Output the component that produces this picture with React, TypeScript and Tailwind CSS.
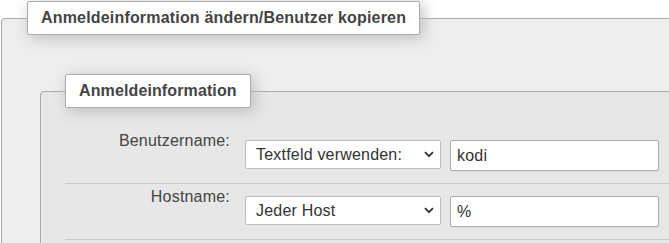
import React from "react";

function Chevron() {
  return (
    <svg width="10" height="7" viewBox="0 0 10 7" className="pointer-events-none">
      <path d="M1 1.2 L5 5.2 L9 1.2" fill="none" stroke="#333" strokeWidth="1.8" />
    </svg>
  );
}

function Row({ label, option, value }: { label: string; option: string; value: string }) {
  return (
    <div className="flex items-start border-b border-[#c8c8c8] pt-[12px] pb-[12px]">
      <div className="w-[165px] shrink-0 -mt-[8px] text-right text-[#444] leading-[18px] tracking-[0.2px]">{label}</div>
      <div className="ml-[15px] w-[196px] shrink-0 h-[29px] border border-[#bdbdbd] rounded-[2px] bg-white flex items-center pl-[10px] pr-[6px] text-[#333] tracking-[0.2px]">
        <span className="flex-1 leading-[18px]">{option}</span>
        <Chevron />
      </div>
      <div className="ml-[9px] w-[209px] shrink-0 h-[31px] border border-[#aaa] rounded-[2px] bg-white shadow-[0_1px_2px_#ddd] flex items-center pl-[6px] text-[#333] leading-[18px] tracking-[0.2px]">
        {value}
      </div>
    </div>
  );
}

export default function App() {
  return (
    <div
      className="w-[669px] h-[243px] overflow-hidden bg-white text-[16px]"
      style={{ fontFamily: '"Liberation Sans", Arial, sans-serif' }}
    >
      <fieldset className="ml-[1px] mt-[1px] w-[720px] border border-[#aaa] rounded-[4px] bg-[#eee] pl-[25px] pr-[24px] pt-[24px] pb-[24px]">
        <legend className="px-[13px] py-[7px] leading-[18px] tracking-[0.18px] border border-[#aaa] rounded-[2px] bg-white shadow-[3px_3px_15px_#bbb] font-bold text-[#444]">
          Anmeldeinformation ändern/Benutzer kopieren
        </legend>
        <fieldset className="mt-[15px] ml-[13px] w-[700px] border border-[#aaa] rounded-[4px] bg-[#e7e7e7] pl-[24px] pr-[24px] pt-[20px] pb-[24px]">
          <legend className="px-[13px] py-[7px] leading-[18px] tracking-[0.12px] border border-[#aaa] rounded-[2px] bg-white shadow-[3px_3px_15px_#bbb] font-bold text-[#444]">
            Anmeldeinformation
          </legend>
          <Row label="Benutzername:" option="Textfeld verwenden:" value="kodi" />
          <Row label="Hostname:" option="Jeder Host" value="%" />
        </fieldset>
      </fieldset>
    </div>
  );
}
